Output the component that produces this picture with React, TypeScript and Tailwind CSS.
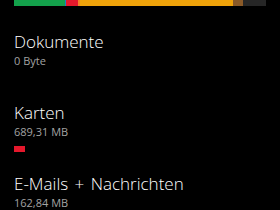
const segments = [
  { w: 51, c: 'bg-[#13a14b]' },
  { w: 1, c: 'bg-[#1b7fc4]' },
  { w: 12, c: 'bg-[#e5182c]' },
  { w: 2, c: 'bg-[#f4802a]' },
  { w: 153, c: 'bg-[#f0a30a]' },
  { w: 10, c: 'bg-[#8a5a28]' },
  { w: 23, c: 'bg-[#262626]' },
]

const items = [
  { title: 'Dokumente', size: '0 Byte', bar: false },
  { title: 'Karten', size: '689,31 MB', bar: true },
  { title: 'E-Mails + Nachrichten', size: '162,84 MB', bar: false },
]

export default function App() {
  return (
    <div className="h-[210px] w-[280px] overflow-hidden bg-black pl-[14px] font-['Open_Sans',sans-serif] text-white">
      <div className="flex h-[6px] w-[252px]">
        {segments.map((s, i) => (
          <div key={i} className={`h-full ${s.c}`} style={{ width: s.w }} />
        ))}
      </div>
      <div className="mt-[26px] flex flex-col">
        {items.map((it) => (
          <div key={it.title} className="h-[71px]">
            <div className="text-[17px] leading-[20px] font-light [word-spacing:2px]">{it.title}</div>
            <div className="mt-[2px] text-[11px] leading-[13px] text-[#a3a3a3]">{it.size}</div>
            {it.bar && <div className="mt-[8px] h-[6px] w-[11px] bg-[#e5182c]" />}
          </div>
        ))}
      </div>
    </div>
  )
}
